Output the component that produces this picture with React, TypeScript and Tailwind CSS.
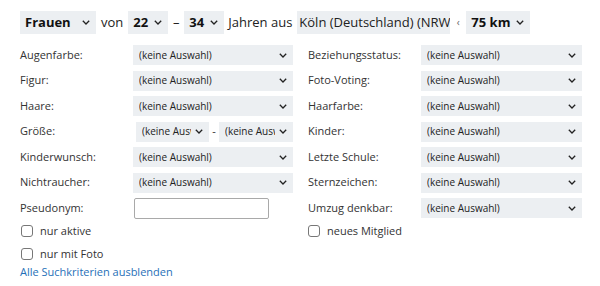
import React from "react";

const Chevron: React.FC<{ className?: string }> = ({ className }) => (
  <svg width="8" height="5" viewBox="0 0 8 5" className={className} fill="none">
    <polyline points="0.8,0.8 4,4 7.2,0.8" stroke="#222" strokeWidth="1.3" />
  </svg>
);

const Select: React.FC<{ text: string; w: string }> = ({ text, w }) => (
  <div className={`flex h-[20px] shrink-0 items-center justify-between bg-[#eceff2] pl-[6px] pr-[6px] ${w}`}>
    <span className="overflow-hidden whitespace-nowrap text-[10px] text-[#222]">{text}</span>
    <Chevron className="ml-[4px] shrink-0" />
  </div>
);

const Row: React.FC<{ label: string; children: React.ReactNode }> = ({ label, children }) => (
  <div className="flex h-[20px] items-center">
    <span className="w-[113px] shrink-0 text-[11px] text-[#333]">{label}</span>
    {children}
  </div>
);

const Check: React.FC<{ label: string; className?: string }> = ({ label, className }) => (
  <label className={`flex h-[18px] items-center ${className ?? ""}`}>
    <span className="ml-[1px] h-[12px] w-[12px] rounded-[3px] border border-[#777] bg-white" />
    <span className="ml-[7px] text-[11px] text-[#333]">{label}</span>
  </label>
);

const TopBox: React.FC<{ text: string; w: string; bold?: boolean }> = ({ text, w, bold }) => (
  <div className={`flex h-[23px] shrink-0 items-center justify-between bg-[#eceff2] pl-[5px] pr-[6px] ${w}`}>
    <span className={`whitespace-nowrap text-[13px] text-[#111] ${bold ? "font-bold" : ""}`}>{text}</span>
    <Chevron />
  </div>
);

const keine = "(keine Auswahl)";

export default function App() {
  return (
    <div className="h-[286px] w-[600px] bg-white pl-[20px] pt-[11px]" style={{ fontFamily: '"Open Sans", sans-serif' }}>
      {/* top search line */}
      <div className="flex items-center text-[13px] text-[#222]">
        <TopBox text="Frauen" w="w-[76px]" bold />
        <span className="ml-[5px]">von</span>
        <div className="ml-[5px]">
          <TopBox text="22" w="w-[40px]" bold />
        </div>
        <span className="w-[16px] text-center">–</span>
        <TopBox text="34" w="w-[40px]" bold />
        <span className="ml-[4px]">Jahren aus</span>
        <div className="ml-[5px] flex h-[23px] w-[153px] items-center overflow-hidden bg-[#eceff2] pl-[2px]">
          <span className="whitespace-nowrap">Köln (Deutschland) (NRW)</span>
        </div>
        <span className="w-[16px] text-center text-[10px] text-[#666]">‹</span>
        <TopBox text="75 km" w="w-[64px]" bold />
      </div>

      {/* criteria */}
      <div className="mt-[11px] flex gap-[15px]">
        <div className="flex w-[273px] flex-col">
          <div className="flex flex-col gap-y-[5.5px]">
            <Row label="Augenfarbe:"><Select text={keine} w="w-[160px]" /></Row>
            <Row label="Figur:"><Select text={keine} w="w-[160px]" /></Row>
            <Row label="Haare:"><Select text={keine} w="w-[160px]" /></Row>
            <Row label="Größe:">
              <div className="ml-[3px] flex items-center">
                <Select text={keine} w="w-[73px]" />
                <span className="w-[10px] text-center text-[11px] text-[#333]">-</span>
                <Select text={keine} w="w-[74px]" />
              </div>
            </Row>
            <Row label="Kinderwunsch:"><Select text={keine} w="w-[160px]" /></Row>
            <Row label="Nichtraucher:"><Select text={keine} w="w-[160px]" /></Row>
            <Row label="Pseudonym:">
              <div className="ml-[1px] h-[21px] w-[135px] rounded-[2px] border border-[#a9a9a9] bg-white" />
            </Row>
          </div>
          <Check label="nur aktive" className="mt-[4px]" />
          <Check label="nur mit Foto" className="mt-[5px]" />
        </div>

        <div className="flex w-[274px] flex-col">
          <div className="flex flex-col gap-y-[5.5px]">
            <Row label="Beziehungsstatus:"><Select text={keine} w="w-[161px]" /></Row>
            <Row label="Foto-Voting:"><Select text={keine} w="w-[161px]" /></Row>
            <Row label="Haarfarbe:"><Select text={keine} w="w-[161px]" /></Row>
            <Row label="Kinder:"><Select text={keine} w="w-[161px]" /></Row>
            <Row label="Letzte Schule:"><Select text={keine} w="w-[161px]" /></Row>
            <Row label="Sternzeichen:"><Select text={keine} w="w-[161px]" /></Row>
            <Row label="Umzug denkbar:"><Select text={keine} w="w-[161px]" /></Row>
          </div>
          <Check label="neues Mitglied" className="mt-[4px] -ml-[1px]" />
        </div>
      </div>

      <a className="mt-[1px] block h-[16px] text-[11px] leading-[16px] text-[#1f70b8]" href="#">
        Alle Suchkriterien ausblenden
      </a>
    </div>
  );
}
